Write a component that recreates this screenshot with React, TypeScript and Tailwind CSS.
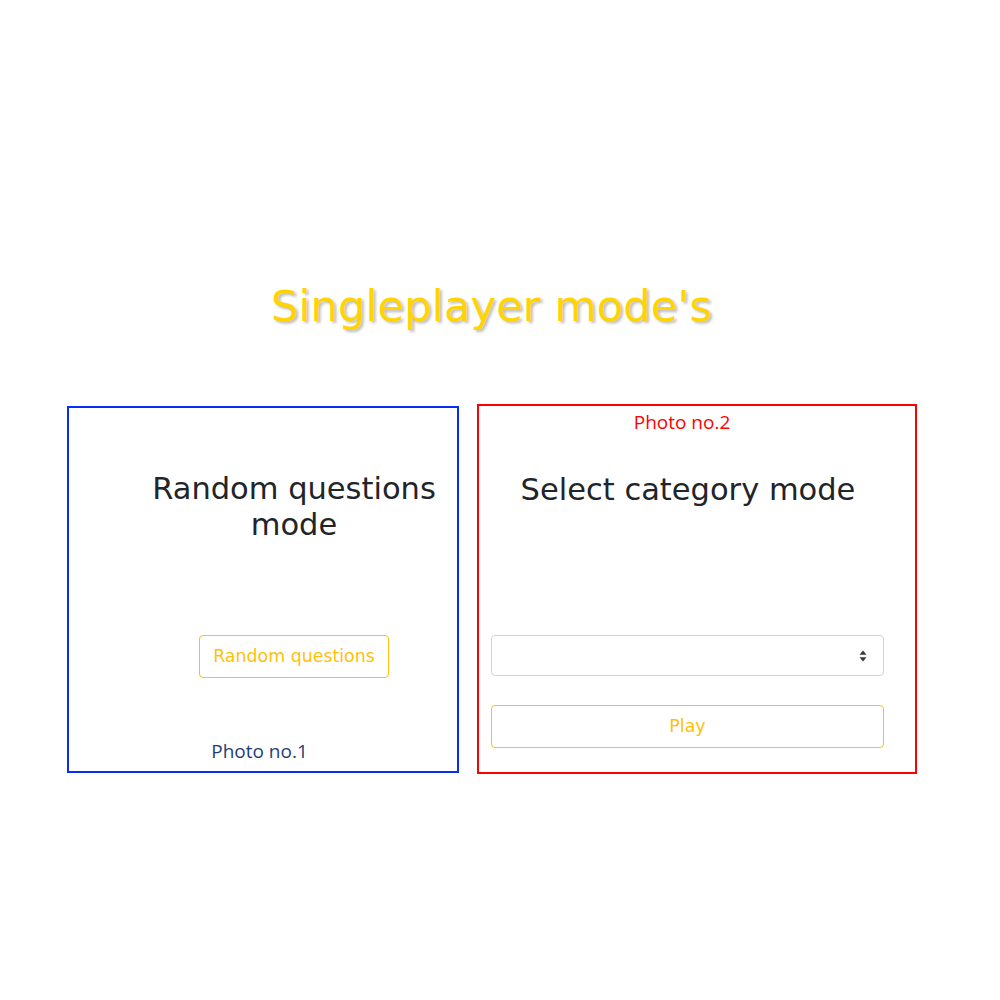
import React from 'react';

// little up/down arrows like bootstrap's custom-select
function SelectArrows() {
    return (
        <svg width="8" height="12" viewBox="0 0 8 12" className="text-[#343a40]">
            <path d="M4 0.5 L7.5 4.8 H0.5 Z" fill="currentColor" />
            <path d="M4 11.5 L7.5 7.2 H0.5 Z" fill="currentColor" />
        </svg>
    );
}

export default function App() {
    const verdana = { fontFamily: '"DejaVu Sans", Verdana, sans-serif' };

    return (
        <div className="min-h-[1000px] bg-white" style={verdana}>
            <h1 className="pt-[280px] pr-[17px] text-center text-[43.4px] leading-[52px] text-[#ffd400] [text-shadow:2px_2px_3px_rgba(0,0,0,0.28)]">
                Singleplayer mode's
            </h1>

            <div className="mt-[72px] ml-[67px] flex items-start gap-[18px]">
                {/* random questions card */}
                <div className="mt-[2px] flex h-[367px] w-[392px] flex-col border-2 border-[#0b2cf5]">
                    <div className="mt-[63px] ml-[75px] w-[300px]">
                        <h2 className="text-center text-[30.5px] leading-[36px] text-[#212529]">
                            Random questions mode
                        </h2>
                        <button
                            type="button"
                            className="mx-auto mt-[92px] block h-[43px] w-[190px] rounded-[4px] border border-[#ffc107] text-[17.4px] text-[#ffc107]"
                        >
                            Random questions
                        </button>
                    </div>
                    <p className="mt-[61px] pr-[7px] text-center font-['Open_Sans',sans-serif] text-[19px] leading-[24px] text-[#1f3d7a]">
                        Photo no.1
                    </p>
                </div>

                {/* select category card */}
                <div className="flex h-[370px] w-[440px] flex-col border-2 border-[#ff0000]">
                    <p className="mt-[4px] pr-[30px] text-center font-['Open_Sans',sans-serif] text-[19px] leading-[24px] text-[#ff0000]">
                        Photo no.2
                    </p>
                    <h2 className="mt-[38px] pr-[18px] text-center text-[30.5px] leading-[36px] text-[#212529]">
                        Select category mode
                    </h2>
                    <div className="mt-[127px] ml-[12px] flex h-[41px] w-[393px] items-center justify-end rounded-[4px] border border-[#ced4da] pr-[16px]">
                        <SelectArrows />
                    </div>
                    <button
                        type="button"
                        className="mt-[29px] ml-[12px] h-[43px] w-[393px] rounded-[4px] border border-[#ffc107] text-[17.4px] text-[#ffc107]"
                    >
                        Play
                    </button>
                </div>
            </div>
        </div>
    );
}
